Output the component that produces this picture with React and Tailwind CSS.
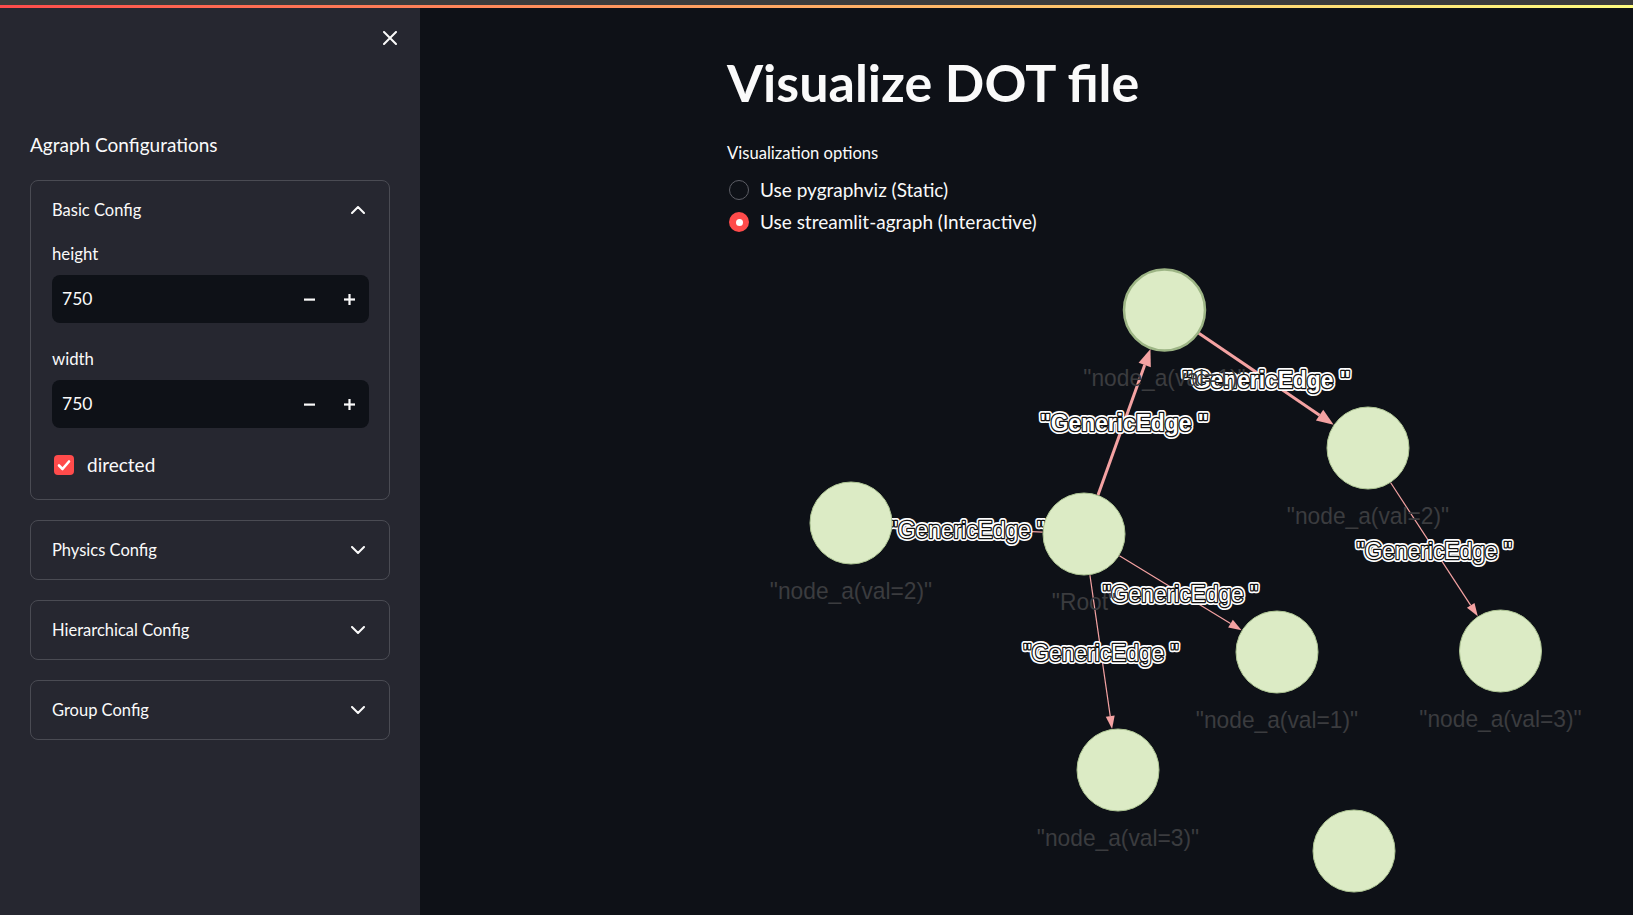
import React from 'react';

const R = 41.5;

const nodes = {
    A: { x: 1164.5, y: 310, label: '"node_a(val=1)"', ly: 386, selected: true },
    B: { x: 851, y: 523, label: '"node_a(val=2)"', ly: 599 },
    C: { x: 1084, y: 534, label: '"Root"', ly: 610 },
    D: { x: 1368, y: 448, label: '"node_a(val=2)"', ly: 524 },
    E: { x: 1277, y: 652, label: '"node_a(val=1)"', ly: 728 },
    F: { x: 1500.5, y: 651, label: '"node_a(val=3)"', ly: 727 },
    G: { x: 1118, y: 770, label: '"node_a(val=3)"', ly: 846 },
    H: { x: 1354, y: 851, label: '', ly: 927 },
};

const edges = [
    { from: 'C', to: 'A', bold: true },
    { from: 'A', to: 'D', bold: true },
    { from: 'C', to: 'B' },
    { from: 'C', to: 'E' },
    { from: 'C', to: 'G' },
    { from: 'D', to: 'F' },
];

const EDGE = '#f4a2a2';
const GRAPH_FONT = "'Liberation Sans', Arial, sans-serif";

// Geometry of one edge: start on source border, tip on target border
const edgeGeom = ({ from, to, bold }) => {
    const a = nodes[from];
    const b = nodes[to];
    const dx = b.x - a.x;
    const dy = b.y - a.y;
    const len = Math.hypot(dx, dy);
    const ux = dx / len;
    const uy = dy / len;
    const sx = a.x + ux * R;
    const sy = a.y + uy * R;
    const tx = b.x - ux * R;
    const ty = b.y - uy * R;
    const al = bold ? 17 : 13;
    const aw = bold ? 6.5 : 4.5;
    const bx = tx - ux * al;
    const by = ty - uy * al;
    return {
        sx, sy, bx, by,
        arrow: `${tx},${ty} ${bx - uy * aw},${by + ux * aw} ${bx + uy * aw},${by - ux * aw}`,
        mx: (a.x + b.x) / 2,
        my: (a.y + b.y) / 2,
    };
};

const EdgeLabel = ({ x, y, bold }) => {
    const common = {
        x: 0,
        y: 0,
        textAnchor: 'middle',
        fontFamily: GRAPH_FONT,
        fontSize: 24.5,
        fontWeight: bold ? 700 : 400,
    };
    const text = '"GenericEdge "';
    return (
        <g transform={`translate(${x} ${y + 9}) scale(0.93 1)`}>
            <text {...common} fill="#fff" stroke="#fff" strokeWidth={6} strokeLinejoin="round">{text}</text>
            <text {...common} fill="#fff" stroke="#111" strokeWidth={2.6} strokeLinejoin="round" paintOrder="stroke">{text}</text>
        </g>
    );
};

const Graph = () => (
    <svg width={1213} height={670} viewBox="420 245 1213 670" className="block">
        {/* edge lines and arrows */}
        {edges.map((e, i) => {
            const g = edgeGeom(e);
            return (
                <g key={i}>
                    <line x1={g.sx} y1={g.sy} x2={g.bx} y2={g.by} stroke={EDGE} strokeWidth={e.bold ? 3 : 1.2} />
                    <polygon points={g.arrow} fill={EDGE} />
                </g>
            );
        })}
        {/* edge labels */}
        {edges.map((e, i) => {
            const g = edgeGeom(e);
            return <EdgeLabel key={i} x={g.mx} y={g.my} bold={e.bold} />;
        })}
        {/* nodes */}
        {Object.entries(nodes).map(([k, n]) => (
            <circle
                key={k}
                cx={n.x}
                cy={n.y}
                r={n.selected ? R - 1 : R - 0.5}
                fill="#dcebc5"
                stroke={n.selected ? '#9db585' : '#aec594'}
                strokeWidth={n.selected ? 2.5 : 1}
            />
        ))}
        {Object.entries(nodes).filter(([, n]) => n.label).map(([k, n]) => (
            <text
                key={k}
                transform={`translate(${n.x} ${n.ly}) scale(0.93 1)`}
                textAnchor="middle"
                fontFamily={GRAPH_FONT}
                fontSize={24.5}
                fill="#3b3c3f"
            >
                {n.label}
            </text>
        ))}
    </svg>
);

const Chevron = ({ up }) => (
    <svg width="14" height="8" viewBox="0 0 14 8" fill="none" stroke="#fafafa" strokeWidth="2" strokeLinecap="round" strokeLinejoin="round">
        {up ? <path d="M1 7 7 1l6 6" /> : <path d="M1 1l6 6 6-6" />}
    </svg>
);

const Expander = ({ title, open, children }) => (
    <div className="rounded-lg border border-[#4a4b53]">
        <div className="flex h-[58px] items-center justify-between pl-[21px] pr-[24px]">
            <span className="text-[16.5px]">{title}</span>
            <Chevron up={open} />
        </div>
        {children}
    </div>
);

const NumberInput = ({ value, className }) => (
    <div className={`flex h-[48px] items-center rounded-lg bg-[#0e1117] ${className}`}>
        <span className="flex-1 pl-[10px] text-[17.5px]">{value}</span>
        <button className="flex h-full w-[40px] items-center justify-center">
            <svg width="11" height="11" viewBox="0 0 11 11"><rect x="0" y="4.5" width="11" height="2.2" fill="#fafafa" /></svg>
        </button>
        <button className="flex h-full w-[40px] items-center justify-center">
            <svg width="11" height="11" viewBox="0 0 11 11">
                <rect x="0" y="4.4" width="11" height="2.2" fill="#fafafa" />
                <rect x="4.4" y="0" width="2.2" height="11" fill="#fafafa" />
            </svg>
        </button>
    </div>
);

const Radio = ({ checked, label }) => (
    <div className="flex h-[32px] items-center gap-[11px] pl-[2px]">
        {checked ? (
            <span className="flex h-[20px] w-[20px] items-center justify-center rounded-full bg-[#ff4b4b]">
                <span className="h-[7px] w-[7px] rounded-full bg-white" />
            </span>
        ) : (
            <span className="h-[20px] w-[20px] rounded-full border border-[#5d5e66]" />
        )}
        <span className="text-[19px]">{label}</span>
    </div>
);

const App = () => {
    return (
        <div className="flex h-screen w-full flex-col overflow-hidden bg-[#0e1117] font-['Lato','Noto_Sans',sans-serif] text-[#fafafa]">
            {/* top strip */}
            <div className="h-[5px] shrink-0 bg-[#3c3c3c]" />
            <div className="h-[3px] shrink-0 bg-linear-to-r from-[#ff4b4b] to-[#fffd80]" />

            <div className="flex min-h-0 flex-1">
                {/* Sidebar */}
                <aside className="flex w-[420px] shrink-0 flex-col bg-[#262730] px-[30px]">
                    <div className="flex justify-end pt-[23px] -mr-[7px]">
                        <svg width="14" height="14" viewBox="0 0 14 14" stroke="#fafafa" strokeWidth="2" strokeLinecap="round">
                            <path d="M1 1l12 12M13 1 1 13" />
                        </svg>
                    </div>
                    <h2 className="mt-[86px] text-[19px] leading-[28px]">Agraph Configurations</h2>

                    <div className="mt-[21px] flex flex-col gap-[20px]">
                        <Expander title="Basic Config" open>
                            <div className="flex flex-col pb-[24px] pl-[21px] pr-[20px]">
                                <label className="mt-[4px] text-[16.75px] leading-[22px]">height</label>
                                <NumberInput value="750" className="mt-[10px]" />
                                <label className="mt-[25px] text-[16.75px] leading-[22px]">width</label>
                                <NumberInput value="750" className="mt-[10px]" />
                                <div className="mt-[27px] flex h-[20px] items-center gap-[13px] pl-[2px]">
                                    <span className="flex h-[20px] w-[20px] items-center justify-center rounded-[4px] bg-[#ff4b4b]">
                                        <svg width="14" height="12" viewBox="0 0 14 12" fill="none" stroke="#fff" strokeWidth="2.6" strokeLinecap="round" strokeLinejoin="round">
                                            <path d="M2 6.5l3.5 3.5L12 2.5" />
                                        </svg>
                                    </span>
                                    <span className="text-[19px]">directed</span>
                                </div>
                            </div>
                        </Expander>
                        <Expander title="Physics Config" />
                        <Expander title="Hierarchical Config" />
                        <Expander title="Group Config" />
                    </div>
                </aside>

                {/* Main */}
                <main className="flex min-w-0 flex-1 flex-col">
                    <div className="h-[237px] shrink-0 pl-[307px]">
                        <h1 className="mt-[41px] text-[52px] font-bold leading-[66px]">Visualize DOT file</h1>
                        <div className="mt-[26px] text-[16.6px] leading-[24px]">Visualization options</div>
                        <div className="mt-[9px] flex flex-col">
                            <Radio label="Use pygraphviz (Static)" />
                            <Radio checked label="Use streamlit-agraph (Interactive)" />
                        </div>
                    </div>
                    <Graph />
                </main>
            </div>
        </div>
    );
};

export default App;
